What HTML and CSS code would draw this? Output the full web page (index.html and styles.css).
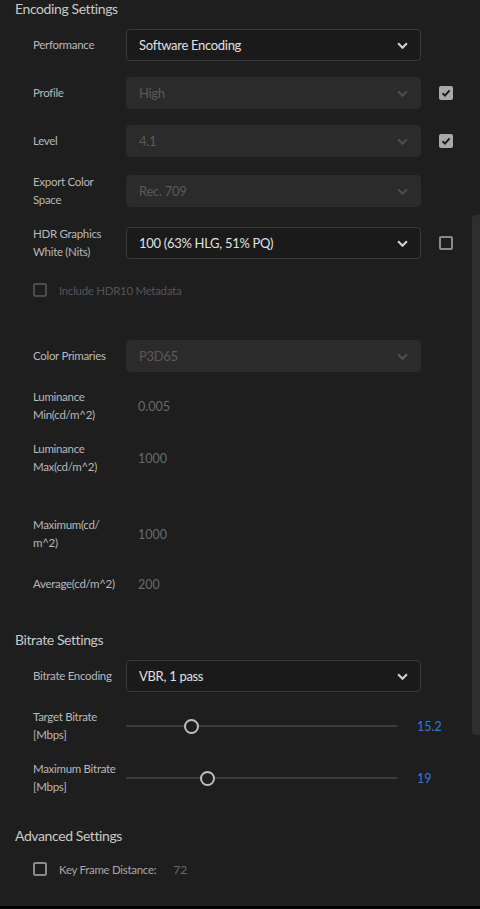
FILE: index.html
```html
<!DOCTYPE html>
<html lang="en">
<head>
    <meta charset="UTF-8">
    <meta name="viewport" content="width=device-width, initial-scale=1.0">
    <title>Export Settings</title>
    <link rel="stylesheet" href="styles.css">
</head>
<body>
    <div class="panel">
        <section class="section">
            <h2>Encoding Settings</h2>
            <div class="rows">
                <div class="row">
                    <div class="label">Performance</div>
                    <div class="select">
                        <span>Software Encoding</span>
                        <svg class="chevron" viewBox="0 0 10 6"><path d="M1 1 L5 5 L9 1"/></svg>
                    </div>
                </div>
                <div class="row">
                    <div class="label">Profile</div>
                    <div class="select disabled">
                        <span>High</span>
                        <svg class="chevron" viewBox="0 0 10 6"><path d="M1 1 L5 5 L9 1"/></svg>
                    </div>
                    <span class="check checked"><svg viewBox="0 0 14 14"><path d="M3.5 7.2 L6 9.6 L10.6 4.4"/></svg></span>
                </div>
                <div class="row">
                    <div class="label">Level</div>
                    <div class="select disabled">
                        <span>4.1</span>
                        <svg class="chevron" viewBox="0 0 10 6"><path d="M1 1 L5 5 L9 1"/></svg>
                    </div>
                    <span class="check checked"><svg viewBox="0 0 14 14"><path d="M3.5 7.2 L6 9.6 L10.6 4.4"/></svg></span>
                </div>
                <div class="row">
                    <div class="label">Export Color<br>Space</div>
                    <div class="select disabled">
                        <span>Rec. 709</span>
                        <svg class="chevron" viewBox="0 0 10 6"><path d="M1 1 L5 5 L9 1"/></svg>
                    </div>
                </div>
                <div class="row">
                    <div class="label">HDR Graphics<br>White (Nits)</div>
                    <div class="select">
                        <span>100 (63% HLG, 51% PQ)</span>
                        <svg class="chevron" viewBox="0 0 10 6"><path d="M1 1 L5 5 L9 1"/></svg>
                    </div>
                    <span class="check"></span>
                </div>
                <div class="row row-check">
                    <span class="check dim"></span>
                    <span class="check-label dim">Include HDR10 Metadata</span>
                </div>
                <div class="spacer"></div>
                <div class="row">
                    <div class="label">Color Primaries</div>
                    <div class="select disabled">
                        <span>P3D65</span>
                        <svg class="chevron" viewBox="0 0 10 6"><path d="M1 1 L5 5 L9 1"/></svg>
                    </div>
                </div>
                <div class="row">
                    <div class="label">Luminance<br>Min(cd/m^2)</div>
                    <div class="value">0.005</div>
                </div>
                <div class="row">
                    <div class="label">Luminance<br>Max(cd/m^2)</div>
                    <div class="value">1000</div>
                </div>
                <div class="spacer spacer-lg"></div>
                <div class="row">
                    <div class="label">Maximum(cd/<br>m^2)</div>
                    <div class="value">1000</div>
                </div>
                <div class="row">
                    <div class="label">Average(cd/m^2)</div>
                    <div class="value">200</div>
                </div>
            </div>
        </section>

        <section class="section">
            <h2>Bitrate Settings</h2>
            <div class="rows">
                <div class="row">
                    <div class="label">Bitrate Encoding</div>
                    <div class="select">
                        <span>VBR, 1 pass</span>
                        <svg class="chevron" viewBox="0 0 10 6"><path d="M1 1 L5 5 L9 1"/></svg>
                    </div>
                </div>
                <div class="row">
                    <div class="label">Target Bitrate<br>[Mbps]</div>
                    <div class="slider"><span class="thumb" style="left: 24%;"></span></div>
                    <span class="slider-value">15.2</span>
                </div>
                <div class="row">
                    <div class="label">Maximum Bitrate<br>[Mbps]</div>
                    <div class="slider"><span class="thumb" style="left: 30%;"></span></div>
                    <span class="slider-value">19</span>
                </div>
            </div>
        </section>

        <section class="section">
            <h2>Advanced Settings</h2>
            <div class="rows">
                <div class="row row-check">
                    <span class="check"></span>
                    <span class="check-label">Key Frame Distance:</span>
                    <span class="kf-value">72</span>
                </div>
            </div>
        </section>

        <div class="scrollbar"></div>
    </div>
</body>
</html>
```

FILE: styles.css
```css
body {
    margin: 0;
    background-color: #000;
    font-family: Lato, "Open Sans", sans-serif;
}
.panel {
    position: relative;
    height: 906px;
    background-color: #1e1e1e;
    overflow: hidden;
}
.section {
    margin-bottom: 31px;
}
.section h2 {
    margin: 0 0 11px;
    padding-left: 15px;
    font-size: 14px;
    line-height: 18px;
    font-weight: normal;
    letter-spacing: -0.4px;
    color: #c9c9c9;
}
.rows {
    display: flex;
    flex-direction: column;
    gap: 16px;
    padding-left: 33px;
}
.row {
    display: flex;
    align-items: center;
    min-height: 32px;
}
.row-check {
    min-height: 26px;
}
.spacer {
    height: 5px;
}
.spacer-lg {
    height: 8px;
}
.label {
    width: 93px;
    flex-shrink: 0;
    font-size: 11.5px;
    line-height: 18px;
    letter-spacing: -0.3px;
    color: #b8b8b8;
}
.select {
    box-sizing: border-box;
    width: 295px;
    height: 32px;
    display: flex;
    align-items: center;
    justify-content: space-between;
    padding: 0 12px;
    background-color: #1a1a1a;
    border: 1px solid #3a3a3a;
    border-radius: 4px;
    font-size: 13px;
    letter-spacing: -0.3px;
    color: #e0e0e0;
}
.select.disabled {
    background-color: #2b2b2b;
    border-color: #2b2b2b;
    color: #5a5a5a;
}
.chevron {
    width: 11px;
    height: 7px;
    fill: none;
    stroke: #d0d0d0;
    stroke-width: 2;
}
.select.disabled .chevron {
    stroke: #4e4e4e;
}
.check {
    box-sizing: border-box;
    width: 14px;
    height: 14px;
    margin-left: 18px;
    border: 2px solid #8a8a8a;
    border-radius: 2px;
    flex-shrink: 0;
}
.row-check .check {
    margin-left: 0;
}
.check.checked {
    background-color: #a9a9a9;
    border-color: #a9a9a9;
    position: relative;
}
.check.checked svg {
    position: absolute;
    left: -2px;
    top: -2px;
    width: 14px;
    height: 14px;
    fill: none;
    stroke: #1e1e1e;
    stroke-width: 2;
}
.check.dim {
    border-color: #4c4c4c;
}
.check-label {
    margin-left: 12px;
    font-size: 11.5px;
    letter-spacing: -0.3px;
    color: #a6a6a6;
}
.check-label.dim {
    color: #555;
}
.kf-value {
    margin-left: 17px;
    font-size: 12px;
    color: #6a6a6a;
}
.value {
    padding-left: 12px;
    font-size: 12.5px;
    color: #6a6a6a;
}
.slider {
    position: relative;
    width: 271px;
    height: 14px;
}
.slider::before {
    content: "";
    position: absolute;
    left: 0;
    right: 0;
    top: 6px;
    height: 2px;
    background-color: #3c3c3c;
}
.thumb {
    position: absolute;
    top: 0;
    box-sizing: border-box;
    width: 15px;
    height: 15px;
    margin-left: -7px;
    border: 2px solid #bdbdbd;
    border-radius: 50%;
    background-color: #1e1e1e;
}
.slider-value {
    margin-left: 20px;
    font-size: 12.5px;
    color: #2c7be5;
}
.scrollbar {
    position: absolute;
    right: 0;
    top: 215px;
    width: 8px;
    height: 520px;
    background-color: #2e2e2e;
    border-radius: 4px 0 0 4px;
}
```
